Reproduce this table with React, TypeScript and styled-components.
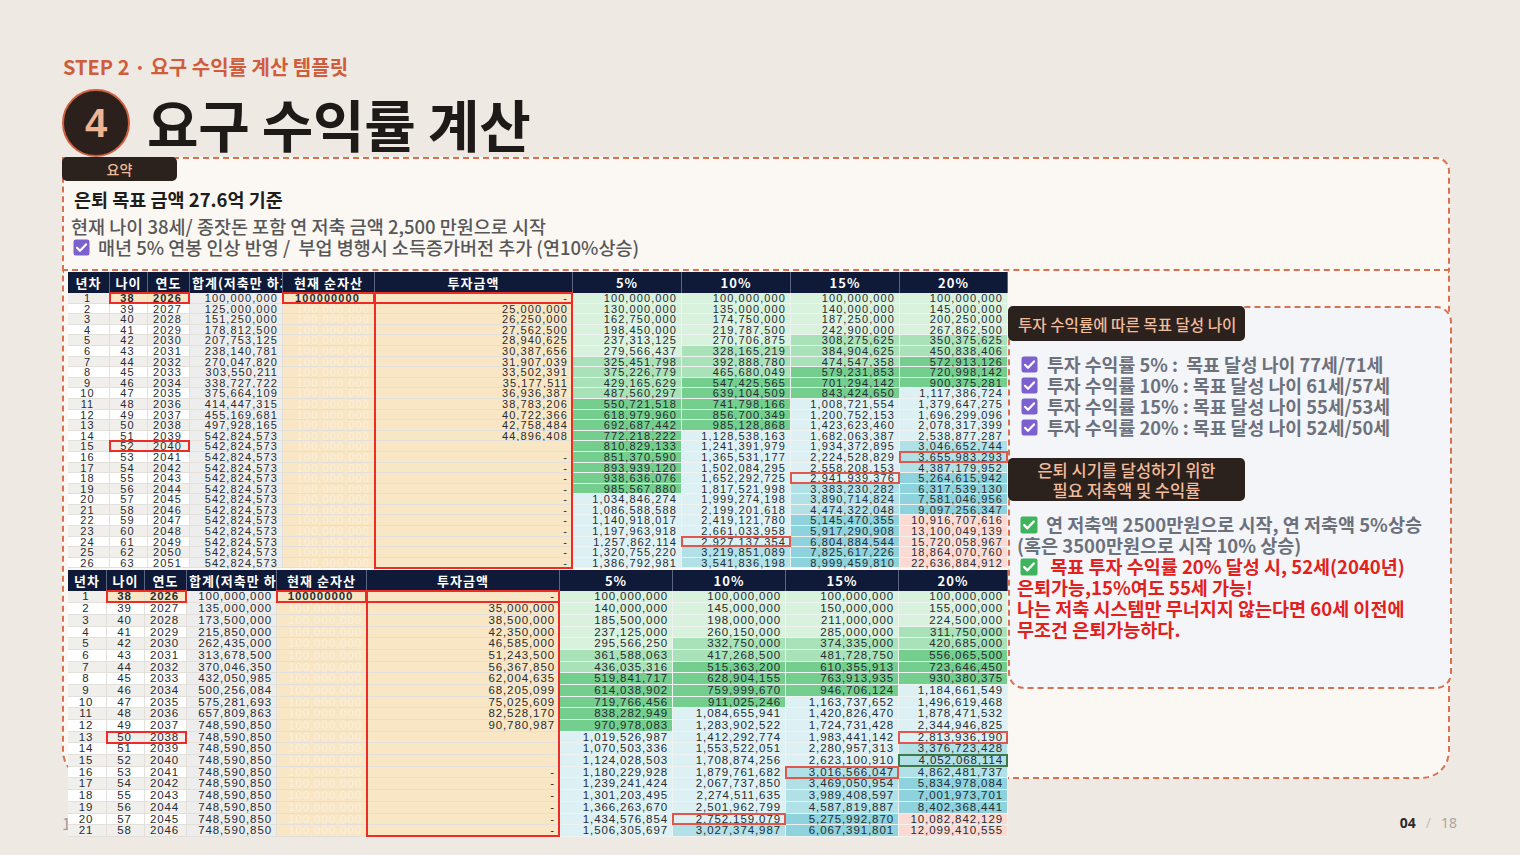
import styled, { createGlobalStyle } from "styled-components";

const KR = `"Noto Sans CJK KR", "Noto Sans", sans-serif`;
const SHEET = `"Liberation Sans", Arial, "Noto Sans CJK KR", sans-serif`;
const DASH = "#d9704f";
const BASE = 100000000;
const RATES = [0.05, 0.1, 0.15, 0.2];

const GlobalStyle = createGlobalStyle`
  html, body {
    margin: 0;
    padding: 0;
  }
  body {
    background: #efe9e3;
    font-family: ${KR};
    width: 1520px;
    height: 855px;
    overflow: hidden;
  }
`;

type Tone = "red" | "soft" | "green";

interface Mark {
  r0: number;
  r1: number;
  c0: number;
  c1: number;
  tone: Tone;
}

interface SheetSpec {
  widths: number[];
  headH: number;
  rowH: number;
  rows: number;
  start: number;
  growth: number;
  payments: number;
  blank: number[];
  font: number;
  spacing: number;
  marks: Mark[];
}

interface Row {
  n: number;
  age: number;
  year: number;
  total: number;
  invest: string;
  vals: number[];
}

// excel style ROUND, half away from zero
const round = (v: number) => Math.round(v + 1e-6);
const fmt = (v: number) => round(v).toLocaleString("en-US");

function heat(v: number) {
  if (v < 3e8) return "#d8f2de";
  if (v < 5e8) return "#a9e2b8";
  if (v < 1e9) return "#74cf8f";
  if (v < 3e9) return "#ddf1f4";
  if (v < 5e9) return "#b2e0e7";
  if (v < 1e10) return "#8dd2dc";
  return "#fbdad4";
}

// the sheet rounds every cell before the next year uses it
function buildRows(s: SheetSpec): Row[] {
  const out: Row[] = [];
  let total = BASE;
  let pay = s.start;
  const vals = RATES.map(() => BASE);
  for (let i = 0; i < s.rows; i++) {
    let inv = 0;
    let invest = "-";
    if (i > 0 && i <= s.payments) {
      if (i > 1) pay = round(pay * s.growth);
      inv = pay;
      invest = fmt(inv);
    } else if (s.blank.includes(i)) {
      invest = "";
    }
    if (i > 0) {
      total += inv;
      RATES.forEach((r, k) => {
        vals[k] = round(vals[k] * (1 + r) + inv);
      });
    }
    out.push({ n: i + 1, age: 38 + i, year: 2026 + i, total, invest, vals: [...vals] });
  }
  return out;
}

const sheets: SheetSpec[] = [
  {
    widths: [42, 38, 42, 93, 92, 198, 109, 109, 109, 108],
    headH: 21,
    rowH: 10.6,
    rows: 26,
    start: 25000000,
    growth: 1.05,
    payments: 13,
    blank: [14],
    font: 11,
    spacing: 1.1,
    marks: [
      { r0: 0, r1: 0, c0: 1, c1: 2, tone: "red" },
      { r0: 0, r1: 0, c0: 4, c1: 4, tone: "red" },
      { r0: 0, r1: 0, c0: 5, c1: 5, tone: "red" },
      { r0: 0, r1: 25, c0: 5, c1: 5, tone: "red" },
      { r0: 14, r1: 14, c0: 1, c1: 2, tone: "red" },
      { r0: 17, r1: 17, c0: 8, c1: 8, tone: "soft" },
      { r0: 23, r1: 23, c0: 7, c1: 7, tone: "soft" },
      { r0: 15, r1: 15, c0: 9, c1: 9, tone: "soft" }
    ]
  },
  {
    widths: [39, 38, 42, 90, 90, 193, 113, 113, 113, 109],
    headH: 21,
    rowH: 11.7,
    rows: 21,
    start: 35000000,
    growth: 1.1,
    payments: 11,
    blank: [12, 13, 14],
    font: 11.5,
    spacing: 0.9,
    marks: [
      { r0: 0, r1: 0, c0: 1, c1: 2, tone: "red" },
      { r0: 0, r1: 0, c0: 4, c1: 4, tone: "red" },
      { r0: 0, r1: 0, c0: 5, c1: 5, tone: "red" },
      { r0: 0, r1: 20, c0: 5, c1: 5, tone: "red" },
      { r0: 12, r1: 12, c0: 1, c1: 2, tone: "red" },
      { r0: 12, r1: 12, c0: 9, c1: 9, tone: "soft" },
      { r0: 14, r1: 14, c0: 9, c1: 9, tone: "green" },
      { r0: 15, r1: 15, c0: 8, c1: 8, tone: "soft" },
      { r0: 19, r1: 19, c0: 7, c1: 7, tone: "soft" }
    ]
  }
];

const HEADERS = ["년차", "나이", "연도", "합계(저축만 하기)", "현재 순자산", "투자금액", "5%", "10%", "15%", "20%"];

const TONES: Record<Tone, string> = {
  red: "#ee2b24",
  soft: "#e0574b",
  green: "#3f7a4a"
};

function PurpleCheck() {
  return (
    <svg width="17" height="17" viewBox="0 0 17 17">
      <rect x="0.5" y="0.5" width="16" height="16" rx="2.5" fill="#7d60cf" />
      <path d="M4 8.8l3 3 6-6.4" stroke="#fff" strokeWidth="2.2" fill="none" strokeLinecap="round" strokeLinejoin="round" />
    </svg>
  );
}

function GreenCheck() {
  return (
    <svg width="18" height="18" viewBox="0 0 18 18">
      <rect x="0.5" y="0.5" width="17" height="17" rx="2" fill="#3fb45d" />
      <path d="M4.2 9.2l3.2 3.1 6.4-6.8" stroke="#fff" strokeWidth="2.4" fill="none" strokeLinecap="round" strokeLinejoin="round" />
    </svg>
  );
}

function Sheet({ spec, gap }: { spec: SheetSpec; gap: number }) {
  const rows = buildRows(spec);
  const offset = (c: number) => spec.widths.slice(0, c).reduce((a, b) => a + b, 0);
  return (
    <SheetWrap $gap={gap}>
      <Grid
        $cols={spec.widths.map((w) => `${w}px`).join(" ")}
        $head={spec.headH}
        $row={spec.rowH}
        $font={spec.font}
        $spacing={spec.spacing}
      >
        {HEADERS.map((h, i) => (
          <Head key={h} $left={i === 3}>
            {h}
          </Head>
        ))}
        {rows.map((r, i) => {
          const stripe = i % 2 === 0 ? "#f1efec" : "#ffffff";
          const first = i === 0;
          return [
            <Cell key={`n${i}`} $bg={stripe} $align="center">
              {r.n}
            </Cell>,
            <Cell key={`a${i}`} $bg={first ? "#f8e6c5" : stripe} $align="center" $bold={first}>
              {r.age}
            </Cell>,
            <Cell key={`y${i}`} $bg={first ? "#f8e6c5" : stripe} $align="center" $bold={first}>
              {r.year}
            </Cell>,
            <Cell key={`t${i}`} $bg="#ededed">
              {fmt(r.total)}
            </Cell>,
            first ? (
              <Cell key={`c${i}`} $bg="#f8e6c5" $align="center" $bold>
                100000000
              </Cell>
            ) : (
              <Cell key={`c${i}`} $bg="#f8e6c5" $color="#fcf0db">
                100,000,000
              </Cell>
            ),
            <Cell key={`i${i}`} $bg="#f8e6c5">
              {r.invest}
            </Cell>,
            ...r.vals.map((v, k) => (
              <Cell key={`v${i}-${k}`} $bg={heat(v)} $line="#eef3f1">
                {fmt(v)}
              </Cell>
            ))
          ];
        })}
      </Grid>
      {spec.marks.map((m, i) => (
        <Box
          key={i}
          $tone={TONES[m.tone]}
          style={{
            left: offset(m.c0) - 1,
            width: offset(m.c1 + 1) - offset(m.c0) + 1,
            top: spec.headH + m.r0 * spec.rowH - 1,
            height: (m.r1 - m.r0 + 1) * spec.rowH + 1
          }}
        />
      ))}
    </SheetWrap>
  );
}

export default function App() {
  return (
    <>
      <GlobalStyle />
      <Page>
        <StepLabel>STEP 2 · 요구 수익률 계산 템플릿</StepLabel>
        <TitleRow>
          <StepBadge>4</StepBadge>
          <Title>요구 수익률 계산</Title>
        </TitleRow>
        <Frame>
          <Summary>
            <Tab $w={115} $h={24} $size={14}>
              요약
            </Tab>
            <Headline>은퇴 목표 금액 27.6억 기준</Headline>
            <Note>현재 나이 38세/ 종잣돈 포함 연 저축 금액 2,500 만원으로 시작</Note>
            <Note $check>
              <PurpleCheck />
              <span>매년 5% 연봉 인상 반영 /&nbsp; 부업 병행시 소득증가버전 추가 (연10%상승)</span>
            </Note>
          </Summary>
          <Lower>
            <Sheets>
              <Sheet spec={sheets[0]} gap={1} />
              <Sheet spec={sheets[1]} gap={2} />
            </Sheets>
            <Panel>
              <Tab $w={237} $h={35} $size={15.6} $left>
                투자 수익률에 따른 목표 달성 나이
              </Tab>
              <Checks>
                <CheckLine>
                  <PurpleCheck />
                  <span>투자 수익률 5% :&nbsp; 목표 달성 나이 77세/71세</span>
                </CheckLine>
                <CheckLine>
                  <PurpleCheck />
                  <span>투자 수익률 10% : 목표 달성 나이 61세/57세</span>
                </CheckLine>
                <CheckLine>
                  <PurpleCheck />
                  <span>투자 수익률 15% : 목표 달성 나이 55세/53세</span>
                </CheckLine>
                <CheckLine>
                  <PurpleCheck />
                  <span>투자 수익률 20% : 목표 달성 나이 52세/50세</span>
                </CheckLine>
              </Checks>
              <Tab $w={237} $h={43} $size={16.5} $two>
                <span>은퇴 시기를 달성하기 위한</span>
                <span>필요 저축액 및 수익률</span>
              </Tab>
              <Plan>
                <PlanLine>
                  <GreenCheck />
                  <span>연 저축액 2500만원으로 시작, 연 저축액 5%상승</span>
                </PlanLine>
                <PlanLine $flush>(혹은 3500만원으로 시작 10% 상승)</PlanLine>
                <PlanLine $red>
                  <GreenCheck />
                  <span>&nbsp;목표 투자 수익률 20% 달성 시, 52세(2040년)</span>
                </PlanLine>
                <PlanLine $red $flush>
                  은퇴가능,15%여도 55세 가능!
                </PlanLine>
                <PlanLine $red $flush>
                  나는 저축 시스템만 무너지지 않는다면 60세 이전에
                </PlanLine>
                <PlanLine $red $flush>
                  무조건 은퇴가능하다.
                </PlanLine>
              </Plan>
            </Panel>
          </Lower>
        </Frame>
        <Footer>
          <Ghost>1</Ghost>
          <PageNo>
            <b>04</b>
            <i>/</i>
            <span>18</span>
          </PageNo>
        </Footer>
      </Page>
    </>
  );
}

const Page = styled.main`
  box-sizing: border-box;
  width: 1520px;
  height: 855px;
  padding: 54px 0 0 62px;
`;

const StepLabel = styled.div`
  font-size: 20px;
  font-weight: 700;
  line-height: 26px;
  color: #cf5d3b;
  margin-left: 1px;
`;

const TitleRow = styled.div`
  display: flex;
  align-items: center;
  gap: 17px;
  margin-top: 9px;
`;

const StepBadge = styled.div`
  box-sizing: border-box;
  width: 68px;
  height: 68px;
  border-radius: 50%;
  border: 2px solid #d0603f;
  background: #2b201b;
  color: #f0b495;
  font-family: "Liberation Sans", Arial, sans-serif;
  font-size: 40px;
  font-weight: 700;
  display: flex;
  align-items: center;
  justify-content: center;
`;

const Title = styled.h1`
  margin: 0;
  font-size: 56px;
  font-weight: 700;
  line-height: 68px;
  color: #1e1a18;
  letter-spacing: -0.3px;
`;

const Frame = styled.div`
  width: 1388px;
  display: flex;
  flex-direction: column;
`;

const Summary = styled.section`
  box-sizing: border-box;
  height: 114px;
  border: 2px dashed ${DASH};
  border-radius: 0 14px 0 0;
  background: #fbf8f4;
`;

const Tab = styled.div<{ $w: number; $h: number; $size: number; $left?: boolean; $two?: boolean }>`
  box-sizing: border-box;
  width: ${(p) => p.$w}px;
  height: ${(p) => p.$h}px;
  margin: -2px 0 0 -2px;
  background: #2b211d;
  border-radius: 5px;
  color: #f2bb9c;
  font-size: ${(p) => p.$size}px;
  font-weight: 500;
  display: flex;
  flex-direction: ${(p) => (p.$two ? "column" : "row")};
  align-items: center;
  justify-content: ${(p) => (p.$left ? "flex-start" : "center")};
  padding-left: ${(p) => (p.$left ? 10 : 0)}px;
  line-height: 20px;
  white-space: nowrap;
`;

const Headline = styled.div`
  margin-top: 6px;
  padding-left: 10px;
  font-size: 18.5px;
  font-weight: 700;
  line-height: 24px;
  color: #1f1d1c;
`;

const Note = styled.div<{ $check?: boolean }>`
  display: flex;
  align-items: center;
  gap: 8px;
  padding-left: ${(p) => (p.$check ? 9 : 7)}px;
  margin-top: ${(p) => (p.$check ? 0 : 5)}px;
  font-size: 18.5px;
  font-weight: 500;
  line-height: 21px;
  color: #585757;
  white-space: nowrap;
`;

const Lower = styled.section`
  box-sizing: border-box;
  height: 508px;
  border: 2px dashed ${DASH};
  border-top: none;
  border-radius: 0 0 28px 28px;
  background: #fbf8f4;
  display: flex;
  align-items: flex-start;
`;

const Sheets = styled.div`
  position: relative;
  z-index: 2;
  flex-shrink: 0;
  width: 940px;
  margin-left: 4px;
  display: flex;
  flex-direction: column;
`;

const SheetWrap = styled.div<{ $gap: number }>`
  position: relative;
  margin-top: ${(p) => p.$gap}px;
`;

const Grid = styled.div<{ $cols: string; $head: number; $row: number; $font: number; $spacing: number }>`
  display: grid;
  grid-template-columns: ${(p) => p.$cols};
  grid-template-rows: ${(p) => p.$head}px;
  grid-auto-rows: ${(p) => p.$row}px;
  font-family: ${SHEET};
  font-size: ${(p) => p.$font}px;
  letter-spacing: ${(p) => p.$spacing}px;
  line-height: ${(p) => p.$row}px;
`;

const Head = styled.div<{ $left?: boolean }>`
  box-sizing: border-box;
  background: #0e1a38;
  color: #ffffff;
  font-family: ${KR};
  font-size: 13px;
  font-weight: 700;
  letter-spacing: 1px;
  line-height: 21px;
  text-align: ${(p) => (p.$left ? "left" : "center")};
  padding-left: ${(p) => (p.$left ? 2 : 0)}px;
  border-right: 1px solid #5d6580;
  white-space: nowrap;
  overflow: hidden;
`;

const Cell = styled.div<{ $bg: string; $align?: string; $color?: string; $bold?: boolean; $line?: string }>`
  box-sizing: border-box;
  background: ${(p) => p.$bg};
  color: ${(p) => p.$color ?? "#272c32"};
  font-weight: ${(p) => (p.$bold ? 700 : 400)};
  text-align: ${(p) => p.$align ?? "right"};
  padding: 0 4px 0 2px;
  border-right: 1px solid ${(p) => p.$line ?? "#e3e0db"};
  border-bottom: 1px solid ${(p) => p.$line ?? "#e3e0db"};
  white-space: nowrap;
`;

const Box = styled.div<{ $tone: string }>`
  position: absolute;
  box-sizing: border-box;
  border: 2px solid ${(p) => p.$tone};
  pointer-events: none;
`;

const Panel = styled.section`
  box-sizing: border-box;
  flex-shrink: 0;
  width: 444px;
  height: 383px;
  margin: 35px -4px 0 0;
  border: 2px dashed ${DASH};
  border-radius: 6px 16px 16px 16px;
  background: #f3f5f9;
`;

const Checks = styled.div`
  margin: 13px 0 22px;
  padding-left: 11px;
  display: flex;
  flex-direction: column;
`;

const CheckLine = styled.div`
  display: flex;
  align-items: center;
  gap: 9px;
  height: 21px;
  font-size: 18.3px;
  font-weight: 700;
  line-height: 21px;
  color: #6c717b;
  white-space: nowrap;
`;

const Plan = styled.div`
  margin-top: 13px;
  padding-left: 7px;
  display: flex;
  flex-direction: column;
`;

const PlanLine = styled.div<{ $red?: boolean; $flush?: boolean }>`
  display: flex;
  align-items: center;
  gap: 8px;
  height: 21px;
  padding-left: ${(p) => (p.$flush ? 0 : 3)}px;
  font-size: 18.5px;
  font-weight: 700;
  line-height: 21px;
  color: ${(p) => (p.$red ? "#e2211c" : "#6c717b")};
  white-space: nowrap;
`;

const Footer = styled.footer`
  position: relative;
  z-index: 0;
  width: 1395px;
  margin-top: 34px;
  display: flex;
  justify-content: space-between;
  align-items: center;
  line-height: 20px;
`;

const Ghost = styled.span`
  font-size: 16px;
  color: #a19c98;
`;

const PageNo = styled.div`
  display: flex;
  align-items: center;
  gap: 10px;
  font-family: "Noto Sans", sans-serif;
  font-size: 14px;

  b {
    font-weight: 700;
    color: #2d2b2a;
  }
  i {
    font-style: normal;
    color: #c3bdb8;
  }
  span {
    color: #aaa4a0;
  }
`;
